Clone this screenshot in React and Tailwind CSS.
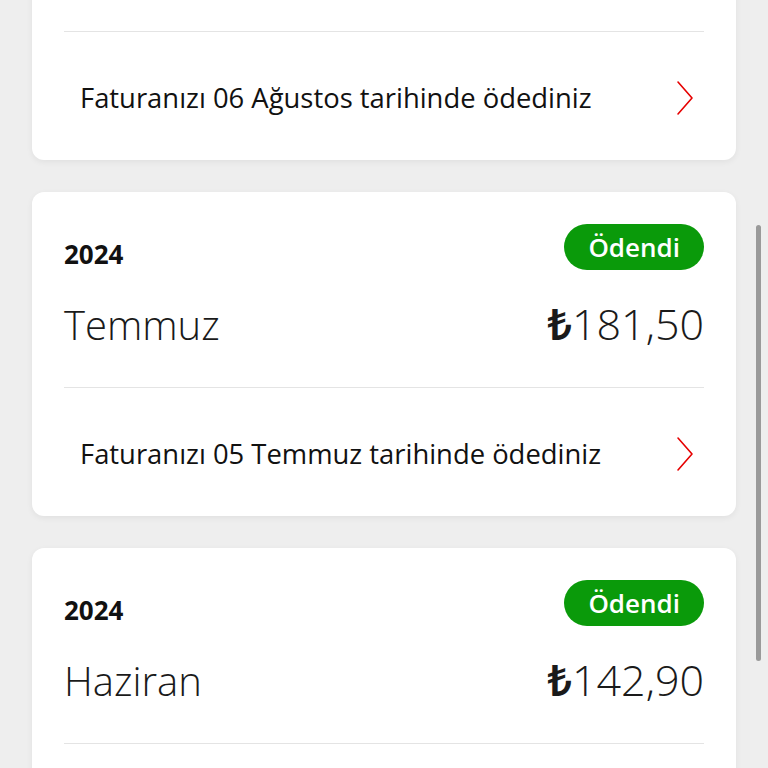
import React from 'react';

const bills = [
  { year: '2024', month: 'Ağustos', amount: '181,50', paid: 'Faturanızı 06 Ağustos tarihinde ödediniz' },
  { year: '2024', month: 'Temmuz', amount: '181,50', paid: 'Faturanızı 05 Temmuz tarihinde ödediniz' },
  { year: '2024', month: 'Haziran', amount: '142,90', paid: 'Faturanızı 05 Haziran tarihinde ödediniz' },
];

function Chevron() {
  return (
    <svg width="18" height="36" viewBox="0 0 18 36" fill="none">
      <path d="M2 2 L16 18 L2 34" stroke="#e60000" strokeWidth="1.6" strokeLinecap="round" strokeLinejoin="round" />
    </svg>
  );
}

function BillCard({ bill }) {
  return (
    <div className="bg-white rounded-xl shadow-[0_2px_6px_rgba(0,0,0,0.06)]">
      <div className="px-8 pt-8 pb-[42px]">
        <div className="flex items-end justify-between h-[46px]">
          <span className="text-[26px] leading-none font-bold text-[#111] mb-[3px]">{bill.year}</span>
          <span className="h-[46px] px-[24px] rounded-full bg-[#0a9a0a] text-white text-[26px] font-semibold flex items-center leading-none">
            Ödendi
          </span>
        </div>
        <div className="flex items-end justify-between mt-[32px] h-[43px] leading-none text-[#1a1a1a]">
          <span className="text-[40px] font-light">{bill.month}</span>
          <span className="text-[43px] font-light">
            <span className="font-semibold">₺</span>
            {bill.amount}
          </span>
        </div>
      </div>
      <div className="mx-8 border-t border-[#e4e4e4]" />
      <div className="h-[128px] flex items-center justify-between pl-12 pr-[42px] pt-[4px]">
        <span className="text-[27.4px] text-[#111] leading-none">{bill.paid}</span>
        <Chevron />
      </div>
    </div>
  );
}

export default function App() {
  return (
    <div
      className="relative h-[768px] w-[768px] overflow-hidden bg-[#eeeeee]"
      style={{ fontFamily: '"Open Sans", "Noto Sans", "DejaVu Sans", sans-serif' }}
    >
      <div className="flex flex-col gap-8 px-8 mt-[-164px]">
        {bills.map((b) => (
          <BillCard key={b.month} bill={b} />
        ))}
      </div>
      <div className="absolute right-[7px] top-[225px] w-[5px] h-[436px] rounded-full bg-[#9a9a9a]" />
    </div>
  );
}
